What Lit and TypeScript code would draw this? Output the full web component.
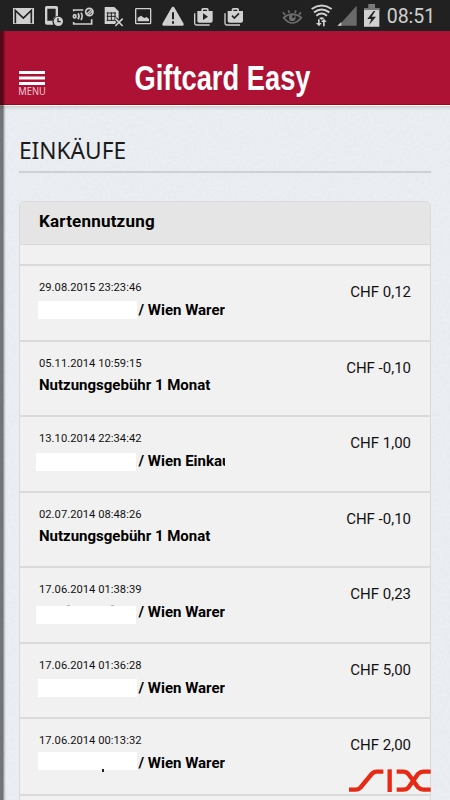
import { LitElement, html, css, svg, nothing } from "lit";
import { customElement } from "lit/decorators.js";
import { styleMap } from "lit/directives/style-map.js";

interface Entry {
  date: string;
  text: string;
  amount: string;
  height: number;
  mask?: { x: number; y: number; specks?: "top" | "bottom" };
}

const entries: Entry[] = [
  { date: "29.08.2015 23:23:46", text: "/ Wien Warer", amount: "CHF 0,12", height: 76, mask: { x: 17.5, y: 34.5 } },
  { date: "05.11.2014 10:59:15", text: "Nutzungsgebühr 1 Monat", amount: "CHF -0,10", height: 75 },
  { date: "13.10.2014 22:34:42", text: "/ Wien Einkau", amount: "CHF 1,00", height: 76, mask: { x: 16, y: 36 } },
  { date: "02.07.2014 08:48:26", text: "Nutzungsgebühr 1 Monat", amount: "CHF -0,10", height: 75 },
  { date: "17.06.2014 01:38:39", text: "/ Wien Warer", amount: "CHF 0,23", height: 76, mask: { x: 16, y: 38, specks: "top" } },
  { date: "17.06.2014 01:36:28", text: "/ Wien Warer", amount: "CHF 5,00", height: 75, mask: { x: 17.5, y: 34.7 } },
  { date: "17.06.2014 00:13:32", text: "/ Wien Warer", amount: "CHF 2,00", height: 77, mask: { x: 17.5, y: 32.5, specks: "bottom" } },
];

@customElement("app-root")
export class AppRoot extends LitElement {
  static styles = css`
    :host {
      display: block;
      position: relative;
      width: 450px;
      height: 800px;
      overflow: hidden;
      background: #e8ecf1;
      color: #111;
      font-family: Roboto, "Noto Sans", sans-serif;
    }
    svg { display: block; }
    .status { height: 31px; background: #212121; }
    .header { height: 73px; background: #ad1133; border-bottom: 1px solid #a5040c; }
    .under { height: 5px; border-top: 1px solid #fff; background: linear-gradient(#cfd1d5, #e8ecf1); }
    .grain { position: absolute; left: 0; top: 108px; opacity: 0.13; }
    .edge {
      position: absolute; left: 0; top: 31px; width: 6px; height: 769px;
      background: linear-gradient(90deg, rgba(0,0,0,.5) 0, rgba(0,0,0,.52) 3px, rgba(0,0,0,.2) 4px, rgba(0,0,0,0) 6px);
    }
    .content { position: relative; padding: 0 19px; }
    .heading {
      margin: 0; height: 60px; font: 400 22.7px/80px "Noto Sans", sans-serif;
      border-bottom: 2px solid #cdd0d4; white-space: nowrap; color: #1a1a1a;
    }
    .card {
      margin-top: 28px; height: 610px; border: 1px solid #dadada; border-radius: 5px 5px 0 0;
      background: #f1f1f1; overflow: hidden;
    }
    .title {
      height: 42px; padding-left: 19px; background: #e5e5e5; border-bottom: 1px solid #d9d9d9;
      font-size: 17px; font-weight: 700; line-height: 39px; letter-spacing: 0.2px; color: #000;
    }
    .gap { height: 19px; }
    .row {
      position: relative; box-sizing: border-box; border-top: 2px solid #dadada;
      display: flex; justify-content: space-between; padding: 14px 19px 0;
    }
    .info { width: 186px; overflow: hidden; white-space: nowrap; }
    .date { font-size: 11.2px; line-height: 16px; letter-spacing: 0.02px; color: #111; }
    .text { font-size: 15px; font-weight: 700; line-height: 20px; margin-top: 3px; color: #000; }
    .masked { padding-left: 99.5px; margin-top: 4px; }
    .amount { font-size: 15px; font-weight: 400; line-height: 20px; margin-top: 2px; }
    .mask { position: absolute; width: 99.5px; height: 18px; background: #fff; }
    .mask.top::before, .mask.top::after {
      content: ""; position: absolute; top: -1px; left: 31px; width: 3px; height: 1px; background: #b5b5b5;
    }
    .mask.top::after { left: 75px; }
    .mask.bottom::after {
      content: ""; position: absolute; top: 17px; left: 64.5px; width: 2px; height: 3px; background: #222;
    }
    .last { height: 20px; border-top: 2px solid #dadada; }
    .six { position: absolute; left: 348px; top: 768px; }
  `;

  private status() {
    return svg`<svg width="450" height="31" viewBox="0 0 1350 93" fill="#d0d0d0">
      <path d="M39 24h63v48H39z"/><path d="M46 70V31l24 23 24-23v39" fill="none" stroke="#212121" stroke-width="5"/>
      <path d="M140 18h29q5 0 5 5v25a17 17 0 0 0-14 26h-20q-5 0-5-5V23q0-5 5-5z"/><path d="M142 26h25v23q-8 4-9 13h-16z" fill="#212121"/>
      <circle cx="175" cy="64" r="14"/><path d="M174 55v10h8" fill="none" stroke="#212121" stroke-width="4"/>
      <g fill="none" stroke="#d0d0d0" stroke-width="5"><path d="M221 34v-4h29M221 66v6h54V58"/><ellipse cx="224" cy="49" rx="4" ry="5"/><path d="M234 40q6 9 0 18M243 38q7 11 0 22"/><circle cx="268" cy="36" r="11"/><path d="M260 42l14-13M265 45l13-12" stroke-width="4"/></g>
      <path d="M314 21h29l13 13v38h-42z"/><path d="M320 39h28M320 49h28M320 61h22M323 37v26M334 37v26M345 37v26" stroke="#212121" stroke-width="3"/><path d="M346 56l22 22M368 56l-22 22" stroke="#212121" stroke-width="11"/><path d="M346 56l22 22M368 56l-22 22" stroke="#d0d0d0" stroke-width="5"/>
      <rect x="407" y="26" width="45" height="45" rx="2" fill="none" stroke="#d0d0d0" stroke-width="4"/><path d="M413 64V53l10-6 10 7 7-3 7 6v7z"/>
      <path d="M519 20q3 0 5 4l27 47q2 6-4 6h-56q-6 0-4-6l27-47q2-4 5-4z"/><path d="M519 37v21M519 64v7" stroke="#212121" stroke-width="6"/>
      <path d="M584 40v30q0 5 5 5h40" fill="none" stroke="#d0d0d0" stroke-width="4"/><path d="M592 33h12v-4q0-5 5-5h12q5 0 5 5v4h12v29q0 6-6 6h-34q-6 0-6-6zm17 0h12v-4h-12z"/>
      <path d="M609 40v20l15-10z" fill="#212121"/>
      <g transform="translate(91 0)"><path d="M584 40v30q0 5 5 5h40" fill="none" stroke="#d0d0d0" stroke-width="4"/><path d="M592 33h12v-4q0-5 5-5h12q5 0 5 5v4h12v29q0 6-6 6h-34q-6 0-6-6zm17 0h12v-4h-12z"/></g>
      <path d="M696 47l7 7 14-14" fill="none" stroke="#212121" stroke-width="5"/>
      <g stroke="#6e6e6e" fill="none" stroke-width="5"><path d="M851 53q26-21 53 0-27 32-53 0z"/><path d="M855 45l-6-8M868 39l-3-8M885 39l3-8M897 44l6-7"/></g><circle cx="877" cy="53" r="10" fill="#6e6e6e"/><circle cx="880" cy="50" r="4" fill="#212121"/>
      <g fill="none" stroke="#d0d0d0" stroke-width="6"><path d="M935 27q30-21 60 0M942 37q23-17 46 0M949 47q16-13 32 0"/></g><path d="M957 54q8-5 16 0l-8 6z"/>
      <path d="M954 58v11h-6l9 10 8-10h-6V58zM969 79V66h-6l9-10 8 10h-6v13z"/>
      <path d="M1070 17v60h-54z" fill="#6a6a6a"/><path d="M1024 66v11h-12z"/>
      <path d="M1092 24h14v-11h18v11h14v56h-46z"/><path d="M1092 24h14v-11h18v11h14v6h-46z" fill="#777"/><path d="M1121 33l-19 24h12l-7 18 21-25h-13l11-17z" fill="#212121"/>
      <text x="1160" y="69" font-family="Roboto, sans-serif" font-size="58" font-weight="400" textLength="146" lengthAdjust="spacingAndGlyphs">08:51</text>
    </svg>`;
  }

  private row(e: Entry) {
    return html`<div class="row" style=${styleMap({ height: e.height + "px" })}>
      <div class="info">
        <div class="date">${e.date}</div>
        <div class="text ${e.mask ? "masked" : ""}">${e.text}</div>
      </div>
      <div class="amount">${e.amount}</div>
      ${e.mask
        ? html`<div class="mask ${e.mask.specks ?? ""}" style=${styleMap({ left: e.mask.x + "px", top: e.mask.y + "px" })}></div>`
        : nothing}
    </div>`;
  }

  render() {
    return html`
      <div class="status">${this.status()}</div>
      <div class="header">
        <svg width="450" height="73" viewBox="0 31 450 73" fill="#fff">
          <path d="M19 71h26v3H19zM19 76.5h26v3H19zM19 82h26v3H19z"/>
          <text x="18.3" y="94.9" font-family="Noto Sans, sans-serif" font-size="10.2" fill="#f1ccd4" textLength="27.5" lengthAdjust="spacingAndGlyphs">MENU</text>
          <text x="134.5" y="90.2" font-family="Liberation Sans, sans-serif" font-weight="700" font-size="35" textLength="176" lengthAdjust="spacingAndGlyphs">Giftcard Easy</text>
        </svg>
      </div>
      <div class="under"></div>
      <svg class="grain" width="450" height="692">
        <filter id="n"><feTurbulence type="fractalNoise" baseFrequency="0.35" numOctaves="2"/><feColorMatrix values="0 0 0 0 1 0 0 0 0 1 0 0 0 0 1 3 0 0 0 -1.1"/></filter>
        <rect width="450" height="692" filter="url(#n)"/>
      </svg>
      <div class="content">
        <h1 class="heading">EINKÄUFE</h1>
        <div class="card">
          <div class="title">Kartennutzung</div>
          <div class="gap"></div>
          ${entries.map((e) => this.row(e))}
          <div class="last"></div>
        </div>
      </div>
      <div class="edge"></div>
      <svg class="six" width="84" height="25" viewBox="0 0 252 75" fill="none" stroke="#e62a14" stroke-width="13">
        <path d="M3 65h19q9 0 15-6l34-41q6-7 15-7h20"/><path d="M125 4v68"/>
        <path d="M146 11h20q9 0 15 7l29 40q7 7 16 7h22M146 65h20q9 0 15-6l29-41q7-7 16-7h22"/>
      </svg>
    `;
  }
}
